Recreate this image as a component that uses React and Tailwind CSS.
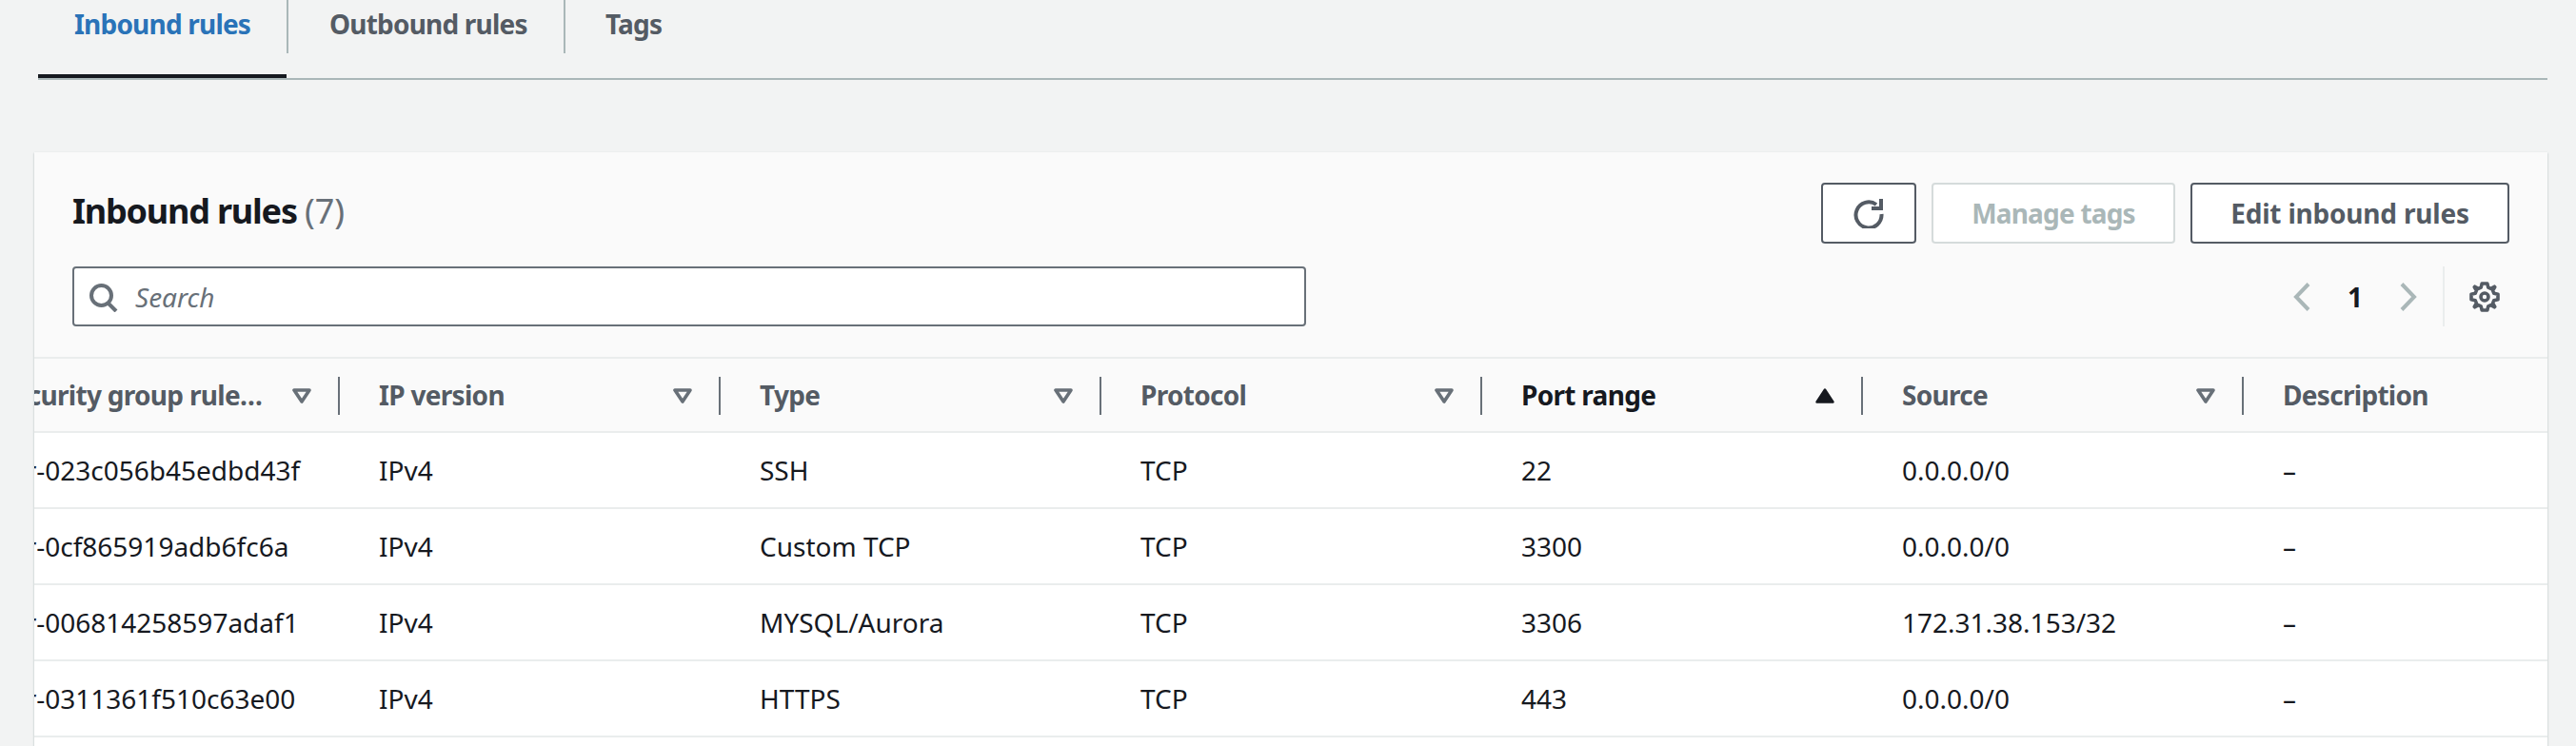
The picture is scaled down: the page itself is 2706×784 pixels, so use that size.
import React from 'react';

const columns = [
  { label: 'Security group rule ID' },
  { label: 'IP version' },
  { label: 'Type' },
  { label: 'Protocol' },
  { label: 'Port range', sorted: true },
  { label: 'Source' },
  { label: 'Description', last: true },
];

const rows = [
  ['sgr-023c056b45edbd43f', 'IPv4', 'SSH', 'TCP', '22', '0.0.0.0/0', '–'],
  ['sgr-0cf865919adb6fc6a', 'IPv4', 'Custom TCP', 'TCP', '3300', '0.0.0.0/0', '–'],
  ['sgr-006814258597adaf1', 'IPv4', 'MYSQL/Aurora', 'TCP', '3306', '172.31.38.153/32', '–'],
  ['sgr-0311361f510c63e00', 'IPv4', 'HTTPS', 'TCP', '443', '0.0.0.0/0', '–'],
  ['sgr-0a41c7de93b2f8e17', 'IPv4', 'HTTP', 'TCP', '80', '0.0.0.0/0', '–'],
];

const Caret = ({ filled }) => (
  <svg viewBox="0 0 20 16" className="w-5 h-4 block">
    {filled ? (
      <path d="M10 1.5 L18.5 14.5 H1.5 Z" fill="#16191f" stroke="#16191f" strokeWidth="2.4" strokeLinejoin="round" />
    ) : (
      <path d="M2 2 H18 L10 14 Z" fill="none" stroke="#687078" strokeWidth="3.6" strokeLinejoin="round" />
    )}
  </svg>
);

const RefreshIcon = () => (
  <svg viewBox="0 0 32 32" className="w-8 h-8" fill="none" stroke="#545b64" strokeWidth="4">
    <path d="M24 7 A13.5 13.5 0 1 0 29.5 17" />
    <path d="M29 1 V11 H19" />
  </svg>
);

const SearchIcon = () => (
  <svg viewBox="0 0 32 32" className="w-8 h-8" fill="none" stroke="#687078" strokeWidth="4">
    <circle cx="13.5" cy="14.5" r="10.5" />
    <path d="M20.5 22.5 L29 31" />
  </svg>
);

const Chevron = ({ d }) => (
  <svg viewBox="0 0 18 30" className="w-[18px] h-[30px]" fill="none" stroke="#aab7b8" strokeWidth="4">
    <path d={d} />
  </svg>
);

const GearIcon = () => (
  <svg viewBox="0 0 32 32" className="w-8 h-8" fill="none" stroke="#545b64" strokeWidth="3.6" strokeLinejoin="round">
    <path d="M13.2 2 H18.8 L19.8 6.2 L22.6 7.4 L26.3 5.2 L26.8 5.7 L24.6 9.4 L25.8 12.2 L30 13.2 V18.8 L25.8 19.8 L24.6 22.6 L26.8 26.3 L26.3 26.8 L22.6 24.6 L19.8 25.8 L18.8 30 H13.2 L12.2 25.8 L9.4 24.6 L5.7 26.8 L5.2 26.3 L7.4 22.6 L6.2 19.8 L2 18.8 V13.2 L6.2 12.2 L7.4 9.4 L5.2 5.7 L5.7 5.2 L9.4 7.4 L12.2 6.2 Z" />
    <circle cx="16" cy="16" r="4" />
  </svg>
);

const HeaderCell = ({ col }) => (
  <div className="w-[400px] shrink-0 h-[76px] flex items-center relative pl-[41px]">
    <span
      className={`w-[283px] truncate font-bold tracking-[-0.7px] ${col.sorted ? 'text-[#16191f]' : 'text-[#545b64]'}`}
    >
      {col.label}
    </span>
    {!col.last && (
      <>
        <span className="absolute right-[30px] top-[31px]">
          <Caret filled={col.sorted} />
        </span>
        <span className="absolute right-0 top-[19px] h-10 w-[2px] bg-[#687078]" />
      </>
    )}
  </div>
);

const App = () => {
  return (
    <div className="h-[784px] w-[2706px] overflow-hidden bg-[#f2f3f3] text-[28px] text-[#16191f] font-['Noto_Sans',sans-serif]">
      {/* tabs */}
      <div className="ml-[40px] mr-[30px] h-[84px] flex border-b-2 border-[#aab7b8]">
        <div className="w-[261px] h-[82px] border-b-[4px] border-[#16191f] pl-[38px] pt-[4px] font-bold tracking-[-0.8px] text-[#2a73b8]">
          Inbound rules
        </div>
        <div className="h-[56px] w-[2px] bg-[#aab7b8]" />
        <div className="w-[289px] pl-[43px] pt-[4px] font-bold tracking-[-0.8px] text-[#545b64]">Outbound rules</div>
        <div className="h-[56px] w-[2px] bg-[#aab7b8]" />
        <div className="pl-[42px] pt-[4px] font-bold tracking-[-0.8px] text-[#545b64]">Tags</div>
      </div>

      {/* card */}
      <div className="ml-[36px] mt-[76px] w-[2640px] h-[700px] bg-white shadow-[0_1px_2px_#aab7b8] overflow-hidden">
        <div className="h-[217px] bg-[#fafafa] border-b-2 border-[#eaeded] pt-[32px] pl-[40px] pr-[40px]">
          <div className="flex items-start justify-between h-[88px]">
            <h2 className="text-[36px] leading-[60px] font-bold tracking-[-1.2px] text-[#16191f]">
              Inbound rules <span className="font-normal tracking-normal text-[#687078]">(7)</span>
            </h2>
            <div className="flex gap-4">
              <button className="w-[100px] h-[64px] flex items-center justify-center bg-white border-2 border-[#545b64] rounded-[4px]">
                <RefreshIcon />
              </button>
              <button className="w-[256px] h-[64px] bg-white border-2 border-[#d5dbdb] rounded-[4px] font-bold tracking-[-0.8px] text-[#aab7b8]">
                Manage tags
              </button>
              <button className="w-[335px] h-[64px] bg-white border-2 border-[#545b64] rounded-[4px] font-bold tracking-[-0.2px] text-[#545b64]">
                Edit inbound rules
              </button>
            </div>
          </div>
          <div className="flex items-center justify-between h-[63px]">
            <div className="w-[1296px] h-[63px] flex items-center bg-white border-2 border-[#687078] rounded-[4px] pl-[15px]">
              <SearchIcon />
              <span className="ml-[17px] italic text-[#687078]">Search</span>
            </div>
            <div className="flex items-center h-[63px] pr-[10px]">
              <Chevron d="M16 1.5 L3 15 L16 28.5" />
              <span className="w-[94px] text-center font-bold text-[#16191f]">1</span>
              <Chevron d="M2 1.5 L15 15 L2 28.5" />
              <div className="ml-[27px] w-[2px] h-[63px] bg-[#eaeded]" />
              <div className="ml-[26px]">
                <GearIcon />
              </div>
            </div>
          </div>
        </div>

        {/* table, scrolled sideways so the first column is cut off */}
        <div className="overflow-hidden">
          <div className="-ml-[79px] w-[2800px]">
            <div className="flex bg-[#fafafa] border-b-[2px] border-[#eaeded] h-[78px]">
              {columns.map((col) => (
                <HeaderCell key={col.label} col={col} />
              ))}
            </div>
            {rows.map((row) => (
              <div key={row[0]} className="flex h-[80px] items-center border-b-2 border-[#eaeded] bg-white">
                {row.map((cell, i) => (
                  <div key={i} className={`w-[400px] shrink-0 whitespace-nowrap ${i === 0 ? 'pl-[39px]' : 'pl-[41px]'}`}>
                    {cell}
                  </div>
                ))}
              </div>
            ))}
          </div>
        </div>
      </div>
    </div>
  );
};

export default App;
